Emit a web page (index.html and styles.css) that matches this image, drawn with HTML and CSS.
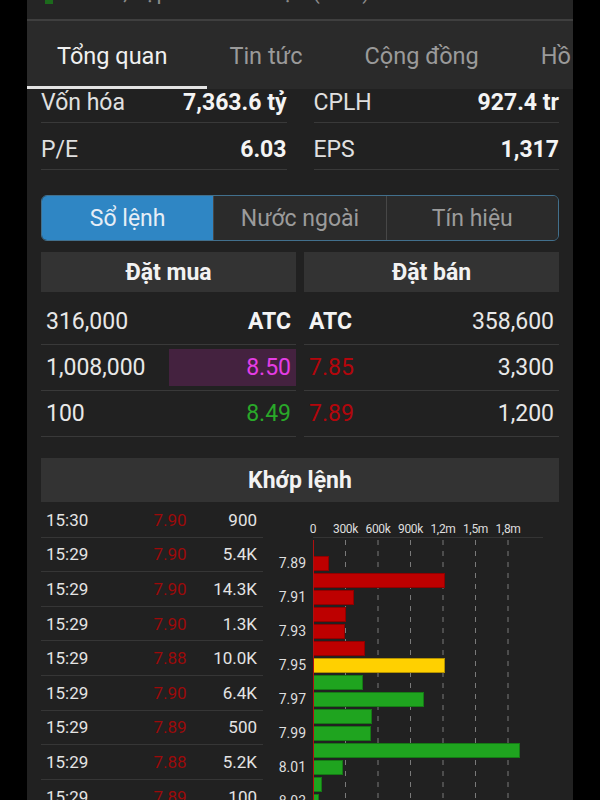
FILE: index.html
```html
<!DOCTYPE html>
<html lang="vi">
<head>
    <meta charset="UTF-8">
    <meta name="viewport" content="width=device-width, initial-scale=1.0">
    <title>Sổ lệnh</title>
    <link rel="stylesheet" href="styles.css">
</head>
<body>
    <div class="screen">
        <!-- Title bar, mostly scrolled off the top -->
        <div class="titlebar">
            <span class="title-icon"></span>
            <span class="title-text">ITA, Tập đoàn Tân Tạo (HSX)</span>
        </div>

        <!-- Tabs -->
        <nav class="tabs">
            <div class="tab active">Tổng quan</div>
            <div class="tab">Tin tức</div>
            <div class="tab">Cộng đồng</div>
            <div class="tab">Hồ sơ</div>
        </nav>

        <div class="content">
            <!-- Company stats -->
            <section class="stats">
                <div class="stat-row"><span>Vốn hóa</span><b>7,363.6 tỷ</b></div>
                <div class="stat-row"><span>CPLH</span><b>927.4 tr</b></div>
                <div class="stat-row"><span>P/E</span><b>6.03</b></div>
                <div class="stat-row"><span>EPS</span><b>1,317</b></div>
            </section>

            <!-- Segmented control -->
            <div class="segments">
                <div class="segment active">Sổ lệnh</div>
                <div class="segment">Nước ngoài</div>
                <div class="segment">Tín hiệu</div>
            </div>

            <!-- Order book -->
            <section class="book">
                <div class="side">
                    <div class="side-head">Đặt mua</div>
                    <div class="order-row">
                        <span class="vol">316,000</span>
                        <span class="price atc">ATC</span>
                    </div>
                    <div class="order-row">
                        <span class="vol">1,008,000</span>
                        <span class="price ceil hl">8.50</span>
                    </div>
                    <div class="order-row">
                        <span class="vol">100</span>
                        <span class="price up">8.49</span>
                    </div>
                </div>
                <div class="side sell">
                    <div class="side-head">Đặt bán</div>
                    <div class="order-row">
                        <span class="price atc">ATC</span>
                        <span class="vol">358,600</span>
                    </div>
                    <div class="order-row">
                        <span class="price down">7.85</span>
                        <span class="vol">3,300</span>
                    </div>
                    <div class="order-row">
                        <span class="price down">7.89</span>
                        <span class="vol">1,200</span>
                    </div>
                </div>
            </section>

            <!-- Matched orders -->
            <div class="match-head">Khớp lệnh</div>
            <section class="match-body">
                <div class="trades">
                    <div class="trade"><span>15:30</span><span class="t-price">7.90</span><span class="t-vol">900</span></div>
                    <div class="trade"><span>15:29</span><span class="t-price">7.90</span><span class="t-vol">5.4K</span></div>
                    <div class="trade"><span>15:29</span><span class="t-price">7.90</span><span class="t-vol">14.3K</span></div>
                    <div class="trade"><span>15:29</span><span class="t-price">7.90</span><span class="t-vol">1.3K</span></div>
                    <div class="trade"><span>15:29</span><span class="t-price">7.88</span><span class="t-vol">10.0K</span></div>
                    <div class="trade"><span>15:29</span><span class="t-price">7.90</span><span class="t-vol">6.4K</span></div>
                    <div class="trade"><span>15:29</span><span class="t-price">7.89</span><span class="t-vol">500</span></div>
                    <div class="trade"><span>15:29</span><span class="t-price">7.88</span><span class="t-vol">5.2K</span></div>
                    <div class="trade"><span>15:29</span><span class="t-price">7.89</span><span class="t-vol">100</span></div>
                </div>

                <!-- Volume by price -->
                <svg class="chart" width="289" height="298" viewBox="0 0 289 298">
                    <g class="axis-text">
                        <text x="43" y="30" text-anchor="middle">0</text>
                        <text x="75.5" y="30" text-anchor="middle">300k</text>
                        <text x="108" y="30" text-anchor="middle">600k</text>
                        <text x="140.5" y="30" text-anchor="middle">900k</text>
                        <text x="173" y="30" text-anchor="middle">1,2m</text>
                        <text x="205.5" y="30" text-anchor="middle">1,5m</text>
                        <text x="238" y="30" text-anchor="middle">1,8m</text>
                    </g>
                    <line class="axis-line" x1="43" y1="34.5" x2="273" y2="34.5"/>
                    <g class="grid">
                        <line x1="75.5" y1="37" x2="75.5" y2="298"/>
                        <line x1="108" y1="37" x2="108" y2="298"/>
                        <line x1="140.5" y1="37" x2="140.5" y2="298"/>
                        <line x1="173" y1="37" x2="173" y2="298"/>
                        <line x1="205.5" y1="37" x2="205.5" y2="298"/>
                        <line x1="238" y1="37" x2="238" y2="298"/>
                    </g>
                    <g class="bars">
                        <rect class="b-red" x="43.5" y="53.5" width="15" height="14"/>
                        <rect class="b-red" x="43.5" y="70.5" width="131" height="14"/>
                        <rect class="b-red" x="43.5" y="87.5" width="40" height="14"/>
                        <rect class="b-red" x="43.5" y="104.5" width="32" height="14"/>
                        <rect class="b-red" x="43.5" y="121.5" width="31" height="14"/>
                        <rect class="b-red" x="43.5" y="138.5" width="51" height="14"/>
                        <rect class="b-ref" x="43.5" y="155.5" width="131" height="14"/>
                        <rect class="b-green" x="43.5" y="172.5" width="49" height="14"/>
                        <rect class="b-green" x="43.5" y="189.5" width="110" height="14"/>
                        <rect class="b-green" x="43.5" y="206.5" width="58" height="14"/>
                        <rect class="b-green" x="43.5" y="223.5" width="57" height="14"/>
                        <rect class="b-green" x="43.5" y="240.5" width="206" height="14"/>
                        <rect class="b-green" x="43.5" y="257.5" width="29" height="14"/>
                        <rect class="b-green" x="43.5" y="274.5" width="8" height="14"/>
                        <rect class="b-green" x="43.5" y="291.5" width="5" height="14"/>
                    </g>
                    <line class="zero-line" x1="43.5" y1="37" x2="43.5" y2="298"/>
                    <g class="price-text">
                        <text x="36" y="65" text-anchor="end">7.89</text>
                        <text x="36" y="99" text-anchor="end">7.91</text>
                        <text x="36" y="133" text-anchor="end">7.93</text>
                        <text x="36" y="167" text-anchor="end">7.95</text>
                        <text x="36" y="201" text-anchor="end">7.97</text>
                        <text x="36" y="235" text-anchor="end">7.99</text>
                        <text x="36" y="269" text-anchor="end">8.01</text>
                        <text x="36" y="303" text-anchor="end">8.03</text>
                    </g>
                </svg>
            </section>
        </div>
    </div>
</body>
</html>
```

FILE: styles.css
```css
/* General Page Styles */
body {
    margin: 0;
    padding: 0;
    background-color: #000;
    font-family: 'Roboto', 'Noto Sans', sans-serif;
    color: #e8e8e8;
}

/* Phone screen */
.screen {
    width: 546px;
    height: 800px;
    margin: 0 27px;
    background-color: #212121;
    overflow: hidden;
}

/* Title bar (scrolled off) */
.titlebar {
    height: 19px;
    background-color: #252525;
    border-bottom: 2px solid #3f3f3f;
    overflow: hidden;
    display: flex;
    align-items: flex-start;
    padding-left: 18px;
    white-space: nowrap;
}

.title-icon {
    width: 8px;
    height: 10px;
    margin-top: -6px;
    background-color: #1c6a1c;
}

.title-text {
    margin-left: 38px;
    margin-top: -19px;
    font-size: 22px;
    line-height: 22px;
    color: #8a8a8a;
}

/* Tabs */
.tabs {
    height: 68px;
    display: flex;
    align-items: center;
    gap: 62px;
    padding-left: 30px;
    background-color: #2a2a2a;
    white-space: nowrap;
    overflow: hidden;
}

.tab {
    position: relative;
    height: 100%;
    display: flex;
    align-items: center;
    padding-top: 2px;
    box-sizing: border-box;
    font-size: 23.5px;
    color: #9a9a9a;
}

.tab.active {
    color: #f0f0f0;
}

.tab.active::after {
    content: "";
    position: absolute;
    left: -30px;
    right: -40px;
    bottom: 0;
    height: 3px;
    background-color: #e4e4e4;
}

/* Scrolling content */
.content {
    padding: 0 14px;
    overflow: hidden;
}

/* Stats */
.stats {
    display: grid;
    grid-template-columns: 1fr 1fr;
    column-gap: 27px;
    margin-top: -13px;
}

.stat-row {
    height: 47px;
    padding-top: 6px;
    box-sizing: border-box;
    display: flex;
    justify-content: space-between;
    align-items: center;
    border-bottom: 1px solid #393939;
    font-size: 23px;
}

.stat-row span {
    color: #e0e0e0;
}

.stat-row b {
    color: #f4f4f4;
}

/* Segmented control */
.segments {
    display: flex;
    height: 46px;
    margin-top: 25px;
    border: 1.5px solid #42708d;
    border-radius: 6px;
    overflow: hidden;
    box-sizing: border-box;
}

.segment {
    flex: 1;
    display: flex;
    align-items: center;
    justify-content: center;
    background-color: #2b2b2b;
    color: #9b9b9b;
    font-size: 23px;
}

.segment + .segment {
    border-left: 1px solid #474747;
}

.segment.active {
    background-color: #2f86c4;
    color: #e6eef6;
}

/* Order book */
.book {
    display: grid;
    grid-template-columns: 1fr 1fr;
    column-gap: 8px;
    margin-top: 11px;
}

.side-head {
    height: 40px;
    display: flex;
    align-items: center;
    justify-content: center;
    margin-bottom: 7px;
    background-color: #333;
    font-size: 23px;
    font-weight: bold;
    color: #f2f2f2;
}

.order-row {
    height: 45px;
    display: grid;
    grid-template-columns: 1fr 1fr;
    border-bottom: 1px solid #393939;
    font-size: 23px;
}

.order-row span {
    display: flex;
    align-items: center;
    padding: 0 5px;
}

.side .price {
    justify-content: flex-end;
}

.side.sell .price {
    justify-content: flex-start;
}

.side.sell .vol {
    justify-content: flex-end;
}

.price.atc {
    font-weight: bold;
    color: #f4f4f4;
}

.price.hl {
    margin: 4px 0;
    background-color: #44223f;
}

.price.ceil {
    color: #e53de5;
}

.price.up {
    color: #29a829;
}

.price.down {
    color: #b3060c;
}

/* Matched orders */
.match-head {
    height: 44px;
    margin-top: 21px;
    display: flex;
    align-items: center;
    justify-content: center;
    background-color: #333;
    font-size: 23px;
    font-weight: bold;
    color: #f2f2f2;
}

.match-body {
    display: flex;
    margin-top: 1px;
}

.trades {
    width: 222px;
    flex-shrink: 0;
}

.trade {
    height: 33.6px;
    display: grid;
    grid-template-columns: 94px 70px 1fr;
    align-items: center;
    border-bottom: 1px solid #363636;
    font-size: 17px;
    color: #e4e4e4;
}

.trade span:first-child {
    padding-left: 5px;
}

.t-price {
    text-align: center;
    color: #9c0a0a;
}

.t-vol {
    text-align: right;
    padding-right: 6px;
}

/* Chart */
.chart {
    display: block;
    margin-left: 7px;
    flex-shrink: 0;
}

.axis-text {
    font-size: 12px;
    fill: #dedede;
    letter-spacing: -0.3px;
}

.axis-line {
    stroke: #343434;
    stroke-width: 1;
}

.grid line {
    stroke: #7a7a7a;
    stroke-width: 1;
    stroke-dasharray: 5 6;
}

.zero-line {
    stroke: #b01010;
    stroke-width: 1;
}

.b-red {
    fill: #bd0000;
    stroke: #900000;
}

.b-ref {
    fill: #ffd000;
    stroke: #b49200;
}

.b-green {
    fill: #1fa41f;
    stroke: #157a15;
}

.price-text {
    font-size: 14px;
    fill: #dedede;
}
```
